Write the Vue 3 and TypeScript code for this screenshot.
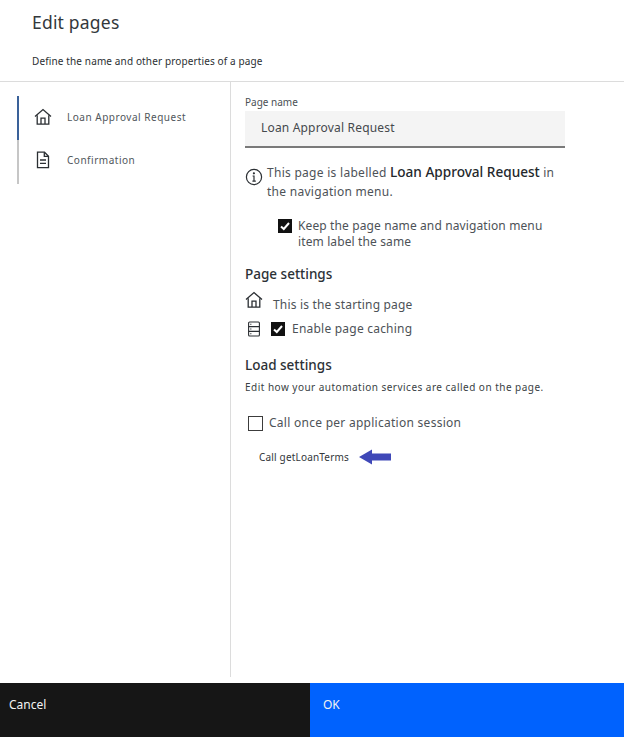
<script setup lang="ts">
const navItems = [
  { label: 'Loan Approval Request', active: true, icon: 'home' },
  { label: 'Confirmation', active: false, icon: 'doc' },
]
</script>

<template>
  <div class="modal">
    <header class="head">
      <h1 class="title">Edit pages</h1>
      <p class="sub">Define the name and other properties of a page</p>
    </header>
    <div class="body">
      <nav class="side">
        <div class="nav">
          <div v-for="item in navItems" :key="item.label" class="nav-item" :class="{ active: item.active }">
            <svg v-if="item.icon === 'home'" class="nav-icon" width="18" height="18" viewBox="0 0 18 18" fill="none" stroke="#2b2f33" stroke-width="1.3">
              <path d="M1 8.6 9 1.6l8 7" />
              <path d="M3.2 7.2V16.2H14.8V7.2" />
              <path d="M7 16V10.2H11V16" />
            </svg>
            <svg v-else class="nav-icon" width="18" height="18" viewBox="0 0 18 18" fill="none" stroke="#2b2f33" stroke-width="1.3">
              <path d="M3.5 1.2H10.5L14.5 5.2V16.6H3.5Z" />
              <path d="M10.3 1.4V5.4H14.3" />
              <path d="M6 9H12M6 12.4H12" />
            </svg>
            <span>{{ item.label }}</span>
          </div>
        </div>
      </nav>
      <main class="main">
        <label class="field-label">Page name</label>
        <div class="input">Loan Approval Request</div>
        <div class="info">
          <svg class="info-icon" width="18" height="18" viewBox="0 0 18 18" fill="none" stroke="#2b2f33" stroke-width="1.2">
            <circle cx="9" cy="9" r="7.6" />
            <path d="M7.4 13.2H10.8M9 13V8H7.6" />
            <circle cx="8.9" cy="5.3" r=".5" fill="#2b2f33" />
          </svg>
          <p>This page is labelled <strong>Loan Approval Request</strong> in the navigation menu.</p>
        </div>
        <div class="keep">
          <span class="check on">
            <svg width="14" height="14" viewBox="0 0 14 14" fill="none" stroke="#fff" stroke-width="2"><path d="M3 7.4 5.8 10 11 4" /></svg>
          </span>
          <span>Keep the page name and navigation menu item label the same</span>
        </div>
        <h2 class="section first">Page settings</h2>
        <div class="start">
          <svg width="18" height="18" viewBox="0 0 18 18" fill="none" stroke="#2b2f33" stroke-width="1.3">
            <path d="M1 8.6 9 1.6l8 7" />
            <path d="M3.2 7.2V16.2H14.8V7.2" />
            <path d="M7 16V10.2H11V16" />
          </svg>
          <span>This is the starting page</span>
        </div>
        <div class="cache">
          <svg class="cache-icon" width="14" height="16" viewBox="0 0 14 16" fill="none" stroke="#2b2f33" stroke-width="1.1">
            <rect x="1.6" y="1" width="10.8" height="14" rx="1" />
            <path d="M1.6 5.6H12.4M1.6 10.4H12.4" />
            <path d="M3.2 3.3H4.4M3.2 8H4.4M3.2 12.7H4.4" />
          </svg>
          <span class="check on">
            <svg width="14" height="14" viewBox="0 0 14 14" fill="none" stroke="#fff" stroke-width="2"><path d="M3 7.4 5.8 10 11 4" /></svg>
          </span>
          <span>Enable page caching</span>
        </div>
        <h2 class="section second">Load settings</h2>
        <p class="hint">Edit how your automation services are called on the page.</p>
        <div class="session">
          <span class="check"></span>
          <span>Call once per application session</span>
        </div>
        <div class="call">
          <span>Call getLoanTerms</span>
          <svg width="34" height="18" viewBox="0 0 34 18"><path d="M1 9 14 1.5V5.5H33V12.5H14V16.5Z" fill="#3f48b8" /></svg>
        </div>
      </main>
    </div>
    <footer class="foot">
      <div class="btn cancel">Cancel</div>
      <div class="btn ok">OK</div>
    </footer>
  </div>
</template>

<style>
html, body { margin: 0; background: #fff; }
</style>

<style scoped>
.modal {
  width: 624px;
  height: 737px;
  display: flex;
  flex-direction: column;
  font-family: "Noto Sans", "Open Sans", sans-serif;
  color: #3a3f44;
  overflow: hidden;
  background: #fff;
}
.head {
  height: 81px;
  box-sizing: content-box;
  padding-left: 32px;
  border-bottom: 1px solid #dcdcdc;
  flex: none;
}
.title {
  margin: 0;
  padding-top: 10px;
  font-size: 17.5px;
  line-height: 24px;
  font-weight: 400;
  letter-spacing: .2px;
  color: #33383c;
}
.sub {
  margin: 19px 0 0;
  font-size: 10px;
  line-height: 16px;
  letter-spacing: .13px;
  color: #2b2f33;
}
.body {
  flex: none;
  height: 595px;
  display: flex;
}
.side {
  flex: none;
  border-right: 1px solid #dcdcdc;
  padding: 14px 0 0 17px;
  box-sizing: content-box;
  width: 213px;
}
.nav-item {
  height: 44px;
  display: flex;
  align-items: center;
  gap: 15px;
  padding-left: 15px;
  border-left: 2px solid #c6c6c6;
  font-size: 10px;
  letter-spacing: .52px;
  color: #50565b;
  padding-bottom: 3px;
  box-sizing: border-box;
}
.nav-item:last-child { padding-bottom: 5px; }
.nav-item.active { border-left-color: #3a6199; }
.nav-icon { flex: none; }
.main {
  flex: 1;
  padding-left: 14px;
  min-width: 0;
}
.field-label {
  display: block;
  margin-top: 14px;
  font-size: 10px;
  line-height: 13px;
  color: #4a4f54;
}
.input {
  margin-top: 2px;
  width: 320px;
  height: 37px;
  box-sizing: border-box;
  padding: 8px 0 0 16px;
  background: #f4f4f4;
  border-bottom: 2px solid #7a7a7a;
  font-size: 12px;
  line-height: 18px;
  letter-spacing: .18px;
  color: #45494d;
}
.info {
  margin-top: 15px;
  display: flex;
  gap: 4px;
  width: 320px;
  font-size: 12px;
  line-height: 19px;
  color: #4d5257;
  letter-spacing: .28px;
}
.info p { margin: 0; }
.info strong { font-weight: 500; color: #24282c; font-size: 13.6px; line-height: 1; letter-spacing: 0; }
.info-icon { margin-top: 5px; flex: none; }
.keep {
  margin: 17px 0 0 33px;
  width: 280px;
  display: flex;
  gap: 6px;
  font-size: 12px;
  line-height: 16px;
  letter-spacing: .12px;
  color: #4d5257;
}
.keep .check { margin-top: 1px; }
.check {
  flex: none;
  width: 14px;
  height: 14px;
  box-sizing: border-box;
  border: 1.5px solid #3c3c3c;
  display: inline-block;
}
.check.on { background: #111; border: 0; }
.check svg { display: block; }
.section {
  margin: 0;
  font-size: 13.5px;
  line-height: 18px;
  font-weight: 500;
  color: #2c3136;
}
.section.first { margin-top: 15px; }
.section.second { margin-top: 19px; }
.start {
  margin-top: 8px;
  display: flex;
  align-items: flex-end;
  gap: 10px;
  font-size: 12px;
  line-height: 16px;
  letter-spacing: .18px;
  color: #4d5257;
}
.start svg { margin-bottom: 4px; }
.cache {
  margin-top: 8px;
  display: flex;
  align-items: center;
  gap: 7px;
  font-size: 12px;
  line-height: 16px;
  letter-spacing: .22px;
  color: #4d5257;
}
.cache svg { display: block; }
.cache-icon { margin: 0 3px 0 2px; }
.hint {
  margin: 6px 0 0;
  font-size: 10px;
  line-height: 14px;
  letter-spacing: .48px;
  color: #3a3f44;
}
.session {
  margin: 21px 0 0 3px;
  display: flex;
  align-items: center;
  gap: 6px;
  font-size: 12px;
  line-height: 16px;
  letter-spacing: .27px;
  color: #4d5257;
}
.session .check { width: 15px; height: 15px; }
.call {
  margin: 17px 0 0 14px;
  display: flex;
  align-items: center;
  gap: 9px;
  font-size: 10px;
  line-height: 18px;
  letter-spacing: .18px;
  color: #33373b;
}
.foot {
  margin-top: 6px;
  height: 54px;
  flex: none;
  display: flex;
}
.btn {
  box-sizing: border-box;
  padding-top: 14px;
  font-size: 12px;
  line-height: 16px;
  color: #f2f2f2;
}
.cancel { width: 310px; background: #161616; padding-left: 9px; }
.ok { flex: 1; background: #0062fe; padding-left: 13px; }
</style>
